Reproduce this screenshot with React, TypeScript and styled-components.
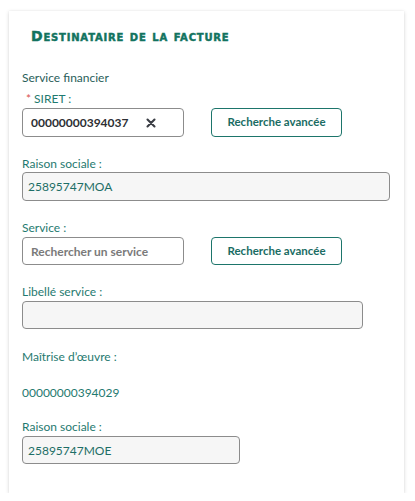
import React from "react";
import styled, { createGlobalStyle } from "styled-components";

const Global = createGlobalStyle`
  html, body { margin: 0; padding: 0; background: #ffffff; }
  body { font-family: "Lato", "Noto Sans", sans-serif; }
  * { box-sizing: border-box; }
`;

const Card = styled.section`
  margin: 11px 0 0 9px;
  width: 395px;
  background: #fff;
  box-shadow: 0 1px 4px rgba(0, 0, 0, 0.16), 0 0 1px rgba(0, 0, 0, 0.08);
  padding: 17px 13px 29px 13px;
  display: flex;
  flex-direction: column;
`;

const Heading = styled.h2`
  margin: 0 0 26px 9px;
  font-family: "DejaVu Sans", sans-serif;
  font-weight: 900;
  font-size: 14px;
  line-height: 16px;
  font-variant: small-caps;
  letter-spacing: 0.8px;
  color: #12735f;
  -webkit-text-stroke: 0.45px #12735f;
`;

const Section = styled.div<{ $mt?: number }>`
  display: flex;
  flex-direction: column;
  margin-top: ${(p) => p.$mt ?? 0}px;
`;

const Label = styled.label<{ $gap?: number; $dark?: boolean }>`
  display: block;
  font-size: 12px;
  line-height: 15px;
  color: ${(p) => (p.$dark ? "#2a5e5a" : "#1f7a70")};
  margin-bottom: ${(p) => p.$gap ?? 1}px;
`;

const Req = styled.span`
  color: #d9534f;
  margin: 0 3px 0 4px;
`;

const Value = styled.div`
  font-size: 12px;
  line-height: 15px;
  color: #1f7a70;
`;

const Row = styled.div`
  display: flex;
  align-items: center;
  gap: 27px;
`;

const InputBox = styled.div<{ $w: number; $h?: number }>`
  width: ${(p) => p.$w}px;
  height: ${(p) => p.$h ?? 29}px;
  border: 1px solid #8c8c8c;
  border-radius: 4px;
  background: #fff;
  display: flex;
  align-items: center;
  padding: 0 10px 0 8px;
`;

const SiretText = styled.span`
  font-size: 12px;
  font-weight: 700;
  color: #2d2f33;
  flex: 1;
`;

const Placeholder = styled.span`
  font-size: 12px;
  font-weight: 700;
  color: #7a7a7a;
`;

const ClearBtn = styled.span`
  display: flex;
  margin-right: 17px;
`;

const ReadOnly = styled.div<{ $w: number; $h?: number }>`
  width: ${(p) => p.$w}px;
  height: ${(p) => p.$h ?? 29}px;
  border: 1px solid #8c8c8c;
  border-radius: 4px;
  background: #f6f6f6;
  display: flex;
  align-items: center;
  padding: 0 5px;
  font-size: 12px;
  color: #1d6e66;
`;

const Button = styled.button<{ $h?: number }>`
  width: 131px;
  height: ${(p) => p.$h ?? 29}px;
  border: 1px solid #1d756b;
  border-radius: 4px;
  background: #fff;
  color: #1a6c63;
  font-family: "Lato", sans-serif;
  font-size: 11.5px;
  font-weight: 700;
  padding: 0;
  padding-bottom: 2px;
`;

const XIcon = () => (
  <svg width="10" height="10" viewBox="0 0 10 10">
    <path d="M1.5 1.5 L8.5 8.5 M8.5 1.5 L1.5 8.5" stroke="#3a3d44" strokeWidth="2.1" strokeLinecap="round" />
  </svg>
);

export default function App() {
  return (
    <>
      <Global />
      <Card>
        <Heading>Destinataire de la facture</Heading>

        <Section>
          <Label $dark $gap={6}>Service financier</Label>
          <Label $gap={2}>
            <Req>*</Req>SIRET :
          </Label>
          <Row>
            <InputBox $w={162}>
              <SiretText>00000000394037</SiretText>
              <ClearBtn>
                <XIcon />
              </ClearBtn>
            </InputBox>
            <Button>Recherche avancée</Button>
          </Row>
        </Section>

        <Section $mt={19}>
          <Label>Raison sociale :</Label>
          <ReadOnly $w={368}>25895747MOA</ReadOnly>
        </Section>

        <Section $mt={19}>
          <Label $gap={2}>Service :</Label>
          <Row>
            <InputBox $w={162} $h={28}>
              <Placeholder>Rechercher un service</Placeholder>
            </InputBox>
            <Button $h={28}>Recherche avancée</Button>
          </Row>
        </Section>

        <Section $mt={19}>
          <Label $gap={2}>Libellé service :</Label>
          <ReadOnly $w={341} $h={28} />
        </Section>

        <Section $mt={20}>
          <Label>Maîtrise d’œuvre :</Label>
        </Section>

        <Section $mt={20}>
          <Value>00000000394029</Value>
        </Section>

        <Section $mt={19}>
          <Label $gap={2}>Raison sociale :</Label>
          <ReadOnly $w={218} $h={28}>25895747MOE</ReadOnly>
        </Section>
      </Card>
    </>
  );
}
